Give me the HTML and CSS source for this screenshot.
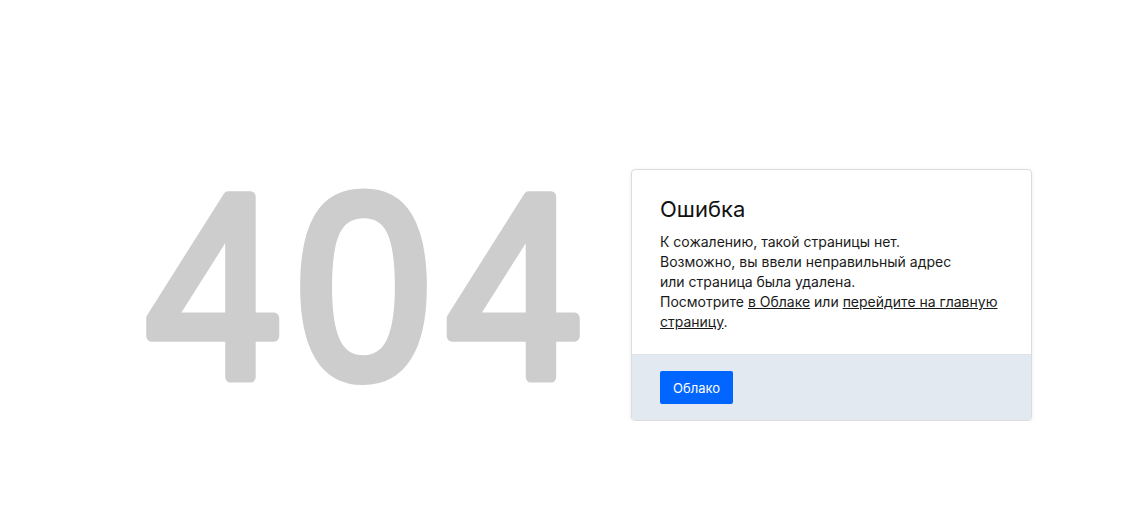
FILE: index.html
```html
<!DOCTYPE html>
<html lang="ru">
<head>
  <meta charset="UTF-8" />
  <meta name="viewport" content="width=device-width, initial-scale=1.0"/>
  <title>Ошибка 404</title>
  <link rel="stylesheet" href="styles.css">
</head>
<body>
  <div class="page">
    <svg class="code" width="440" height="200" viewBox="0 0 440 200">
      <g class="digits">
        <text transform="translate(68.5 193) scale(0.93 1)">4</text>
        <text transform="translate(218.5 193) scale(0.93 1)">0</text>
        <text transform="translate(369 193) scale(0.93 1)">4</text>
      </g>
    </svg>

    <div class="card">
      <div class="card-body">
        <h1>Ошибка</h1>
        <p>
          К сожалению, такой страницы нет.<br>
          Возможно, вы ввели неправильный адрес<br>
          или страница была удалена.<br>
          Посмотрите <a href="#">в Облаке</a> или <a href="#">перейдите на главную страницу</a>.
        </p>
      </div>
      <div class="card-footer">
        <button type="button">Облако</button>
      </div>
    </div>
  </div>
</body>
</html>
```

FILE: styles.css
```css
body {
  margin: 0;
  background: #fff;
  font-family: Inter, "Noto Sans", sans-serif;
  color: #1a1a1a;
}
.page {
  display: flex;
  justify-content: center;
  align-items: flex-start;
  gap: 46px;
  padding: 169px 0 0 45px;
}
.code {
  margin-top: 15px;
  flex: none;
  overflow: visible;
}
.digits text {
  font-family: "Liberation Sans", Arial, sans-serif;
  font-weight: normal;
  font-size: 262px;
  text-anchor: middle;
  fill: #cdcdcd;
  stroke: #cdcdcd;
  stroke-width: 11px;
  stroke-linejoin: round;
}
.card {
  width: 399px;
  flex: none;
  border: 1px solid #dcdcdc;
  border-radius: 4px;
  box-shadow: 0 1px 4px rgba(0,0,0,0.08);
  overflow: hidden;
}
.card-body {
  padding: 25px 28px 22px;
}
h1 {
  margin: 0 0 9px;
  font-size: 22px;
  font-weight: 400;
  line-height: 28px;
  color: #111;
}
p {
  margin: 0;
  font-size: 14px;
  line-height: 20px;
}
a {
  color: #1a1a1a;
  text-decoration: underline;
}
.card-footer {
  background: #e3e9f0;
  border-top: 1px solid #dde3ea;
  padding: 16px 28px;
}
button {
  width: 73px;
  height: 33px;
  background-color: #0066ff;
  color: white;
  border: none;
  border-radius: 2px;
  font-family: Inter, sans-serif;
  font-size: 13px;
  cursor: pointer;
}
```
